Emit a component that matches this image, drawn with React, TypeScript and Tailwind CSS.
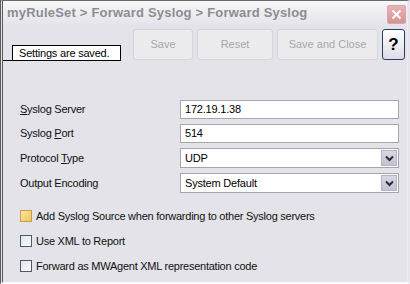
const font = { fontFamily: '"Liberation Sans", Arial, sans-serif' };

function Chevron() {
  return (
    <svg width="9" height="7" viewBox="0 0 9 7">
      <path d="M1 1.5 L4.5 5 L8 1.5" fill="none" stroke="#2a2a3a" strokeWidth="2" />
    </svg>
  );
}

function TextRow({ label, value }: { label: JSX.Element; value: string }) {
  return (
    <div className="flex items-center h-[19px]">
      <div className="w-[160px] text-[11px] tracking-[-0.25px] text-[#111]">{label}</div>
      <div className="flex-1 h-[19px] bg-white border border-[#a5a5ae] flex items-center px-[4px] text-[11px] tracking-[-0.2px] text-black">
        {value}
      </div>
    </div>
  );
}

function SelectRow({ label, value }: { label: JSX.Element; value: string }) {
  return (
    <div className="flex items-center h-[20px]">
      <div className="w-[160px] text-[11px] tracking-[-0.25px] text-[#111]">{label}</div>
      <div className="flex-1 h-[20px] bg-white border border-[#a5a5ae] flex items-center pl-[4px] pr-[1px] text-[11px] tracking-[-0.2px] text-black">
        <span className="flex-1">{value}</span>
        <span className="w-[16px] h-[16px] flex items-center justify-center bg-gradient-to-b from-[#d8d8e4] to-[#c2c2d2] border border-[#b4b4c6]">
          <Chevron />
        </span>
      </div>
    </div>
  );
}

function Check({ label, hot }: { label: string; hot?: boolean }) {
  return (
    <div className="flex items-center gap-[4px] h-[14px]">
      <span
        className={
          hot
            ? 'w-[12px] h-[12px] border border-[#c9a040] bg-gradient-to-br from-[#fbe6a8] to-[#f0c060]'
            : 'w-[12px] h-[12px] border border-[#4c5a70] bg-gradient-to-br from-[#dfe4ea] to-[#fafafc]'
        }
      />
      <span className="text-[11px] tracking-[-0.25px] text-[#111]">{label}</span>
    </div>
  );
}

export default function App() {
  return (
    <div style={font} className="w-[410px] h-[284px] bg-[#e3e3e9] border-l-[3px] border-double border-l-[#5a5a5a] border-t border-t-[#6a6a6a] border-b-2 border-b-[#fbfbfd] border-r-[3px] border-r-[#ececf2] flex flex-col overflow-hidden">
      <div className="h-[24px] flex items-center justify-between pl-[4px] pr-[1px] bg-gradient-to-b from-[#f7f7f9] to-[#e4e4ea]">
        <span className="text-[13px] font-bold text-[#8c8c92] tracking-[0.2px]">
          myRuleSet &gt; Forward Syslog &gt; Forward Syslog
        </span>
        <span className="w-[19px] h-[19px] mt-[2px] rounded-[2px] bg-gradient-to-b from-[#e8b4b4] to-[#d49494] border border-[#d8a8a8] flex items-center justify-center">
          <svg width="11" height="11" viewBox="0 0 11 11">
            <path d="M1.5 1.5 L9.5 9.5 M9.5 1.5 L1.5 9.5" stroke="#fff" strokeWidth="2" />
          </svg>
        </span>
      </div>
      <div className="flex items-end h-[36px] pt-[4px]">
        <div className="w-[9px] h-[1px] bg-black" />
        <div className="w-[109px] h-[16px] bg-white border border-black flex items-center pl-[6px] text-[11px] tracking-[-0.2px] whitespace-nowrap text-black leading-none">
          Settings are saved.
        </div>
        <div className="flex self-stretch gap-[4px] ml-[12px] pb-[1px]">
          <div className="w-[60px] rounded-[3px] bg-[#ececee] border border-[#d4d4d8] flex items-center justify-center text-[11px] text-[#a6a6aa]">
            Save
          </div>
          <div className="w-[76px] rounded-[3px] bg-[#ececee] border border-[#d4d4d8] flex items-center justify-center text-[11px] text-[#a6a6aa]">
            Reset
          </div>
          <div className="w-[101px] rounded-[3px] bg-[#ececee] border border-[#d4d4d8] flex items-center justify-center text-[11px] text-[#a6a6aa]">
            Save and Close
          </div>
          <div className="w-[23px] rounded-[3px] bg-gradient-to-b from-[#ffffff] to-[#dcdce8] border border-[#2c3c5c] flex items-center justify-center text-[17px] font-bold text-black">
            ?
          </div>
        </div>
      </div>
      <div className="flex flex-col pl-[17px] pr-[8px] pt-[39px] gap-[5px]">
        <TextRow label={<><u>S</u>yslog Server</>} value="172.19.1.38" />
        <TextRow label={<>Syslog <u>P</u>ort</>} value="514" />
        <SelectRow label={<>Protocol <u>T</u>ype</>} value="UDP" />
        <SelectRow label={<>Output Encoding</>} value="System Default" />
      </div>
      <div className="flex flex-col pl-[17px] pt-[16px] gap-[11px]">
        <Check hot label="Add Syslog Source when forwarding to other Syslog servers" />
        <Check label="Use XML to Report" />
        <Check label="Forward as MWAgent XML representation code" />
      </div>
    </div>
  );
}
